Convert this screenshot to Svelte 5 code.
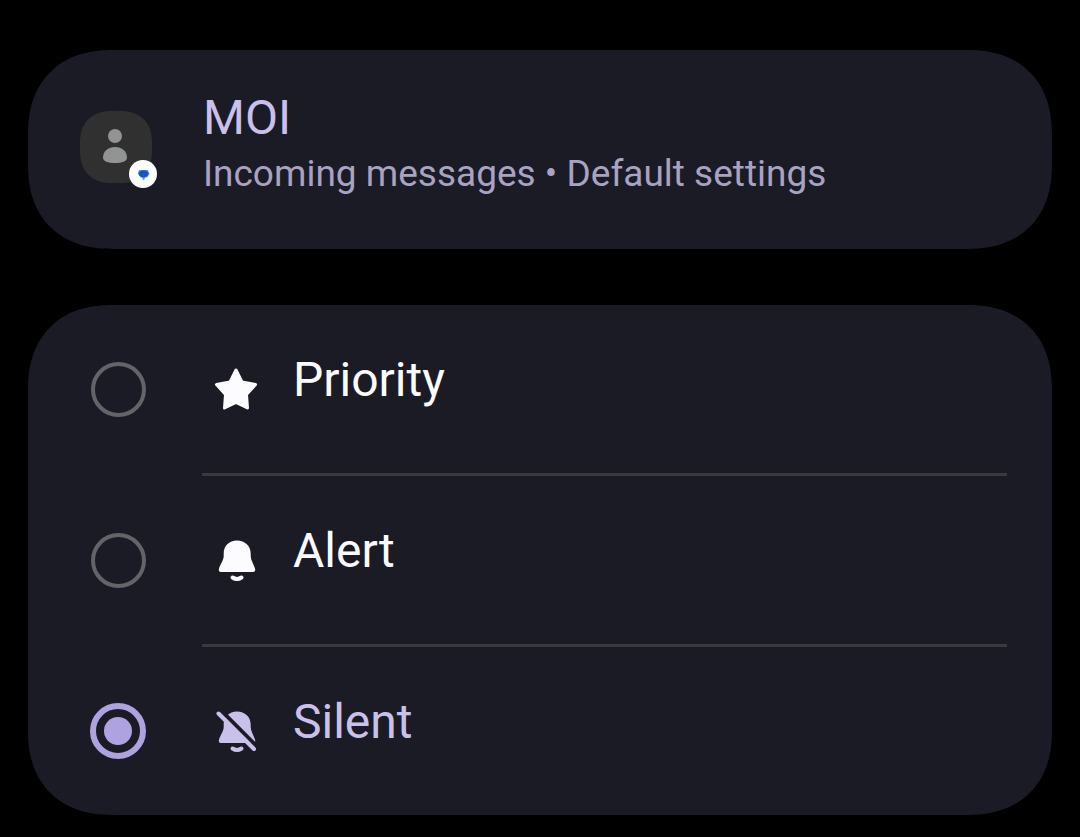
<script>
  let selected = $state("silent");

  const options = [
    { id: "priority", label: "Priority" },
    { id: "alert", label: "Alert" },
    { id: "silent", label: "Silent" }
  ];

  const bellPath =
    "M25 4.500C17 4.500 11.700 10 11.700 17.500V20C11.700 24 8.500 28 7 32.500C6.300 34.700 7.200 36 9 36H41C42.800 36 43.700 34.700 43 32.500C41.500 28 38.700 24 38.700 20V17.500C38.700 10 33 4.500 25 4.500Z";
</script>

<main class="page">
  <!-- Conversation -->
  <header class="card contact">
    <div class="avatar">
      <svg class="person" viewBox="0 0 72 72" aria-hidden="true">
        <circle cx="35" cy="25" r="7" />
        <path d="M23 47C23 40 28 36 35 36S47 40 47 47C47 50 42 52 35 52S23 50 23 47Z" />
      </svg>
      <span class="badge">
        <svg viewBox="0 0 28 28" aria-hidden="true">
          <path d="M10 10H19L20.500 14L18 17.500H16.500L14.500 20.500L12.500 17.500H11.500L9 13Z" fill="#5b9cf0" />
          <ellipse cx="14.500" cy="13.700" rx="5" ry="3.500" fill="#1556c4" />
        </svg>
      </span>
    </div>
    <div class="contact-text">
      <h1>MOI</h1>
      <p>Incoming messages • Default settings</p>
    </div>
  </header>

  <!-- Notification level -->
  <div class="card options" role="radiogroup" aria-label="Notifications">
    {#each options as option (option.id)}
      <label class="option" class:selected={selected === option.id}>
        <input
          type="radio"
          name="level"
          value={option.id}
          bind:group={selected}
        />
        <span class="option-body">
          <svg class="icon" viewBox="0 0 48 48" aria-hidden="true">
            {#if option.id === "priority"}
              <path
                class="star"
                d="M24 5L30 17L43.500 19.500L34.500 29.500L35.500 43L24 37.500L12.500 43L13.500 29.500L4.500 19.500L18 17Z"
              />
            {:else}
              <path d={bellPath} />
              <path class="clapper" d="M20.500 41.500Q25 44.500 29.500 41.500" />
              {#if option.id === "silent"}
                <path class="slash-gap" d="M4 -1.500L48 42.500" />
                <path class="slash" d="M6.500 6.500L42 42" />
              {/if}
            {/if}
          </svg>
          <span class="option-label">{option.label}</span>
        </span>
      </label>
    {/each}
  </div>
</main>

<style>
  :global(body) {
    margin: 0;
    background: #000;
  }

  .page {
    --surface: #1b1b26;
    --accent: #aea2e0;
    --accent-text: #c9c1ea;
    display: flex;
    flex-direction: column;
    gap: 56px;
    padding: 50px 28px 22px;
    font-family: Roboto, sans-serif;
    color: #fcfbff;
  }

  .card {
    background: var(--surface);
    border-radius: 76px;
  }

  .contact {
    display: flex;
    align-items: center;
    gap: 51px;
    padding: 40px 52px 45px;
  }

  .avatar {
    position: relative;
    flex: none;
    width: 72px;
    height: 72px;
    border-radius: 28px;
    background: #303030;
  }

  .avatar svg {
    display: block;
  }

  .person {
    fill: #929393;
  }

  .badge {
    position: absolute;
    right: -5px;
    bottom: -5px;
    width: 28px;
    height: 28px;
    border-radius: 50%;
    background: #fff;
  }

  .contact-text {
    padding-bottom: 8px;
  }

  h1,
  p {
    margin: 0;
    font-weight: 400;
  }

  h1 {
    font-size: 48px;
    line-height: 56px;
    color: var(--accent-text);
  }

  p {
    margin-top: 6px;
    font-size: 37px;
    line-height: 44px;
    color: #a8a2c3;
  }

  .option {
    display: grid;
    grid-template-columns: 56px 1fr;
    column-gap: 56px;
    align-items: center;
    padding: 0 45px 0 62px;
    cursor: pointer;
  }

  .option:not(:last-child)::after {
    content: "";
    grid-column: 2;
    height: 3px;
    background: #3a393c;
  }

  input {
    appearance: none;
    justify-self: center;
    box-sizing: border-box;
    width: 55px;
    height: 55px;
    margin: 0;
    border: 4px solid #646368;
    border-radius: 50%;
    cursor: pointer;
  }

  input:checked {
    width: 56px;
    height: 56px;
    padding: 8px;
    border: 6px solid var(--accent);
    background: var(--accent) content-box;
  }

  .option-body {
    display: flex;
    align-items: center;
    gap: 33px;
    height: 168px;
    padding-left: 10px;
  }

  .icon {
    width: 48px;
    height: 48px;
    fill: currentColor;
    stroke-linecap: round;
    stroke-linejoin: round;
  }

  .star {
    stroke: currentColor;
    stroke-width: 3;
  }

  .clapper,
  .slash {
    fill: none;
    stroke: currentColor;
    stroke-width: 4;
  }

  .slash-gap {
    fill: none;
    stroke: var(--surface);
    stroke-width: 4;
  }

  .option-label {
    padding-bottom: 18px;
    font-size: 48px;
    line-height: 56px;
  }

  .selected {
    color: var(--accent-text);
  }

  @supports (corner-shape: superellipse(1.2)) {
    .card {
      border-radius: 85px;
      corner-shape: superellipse(1.2);
    }

    .avatar {
      border-radius: 32px;
      corner-shape: superellipse(1.2);
    }
  }
</style>
